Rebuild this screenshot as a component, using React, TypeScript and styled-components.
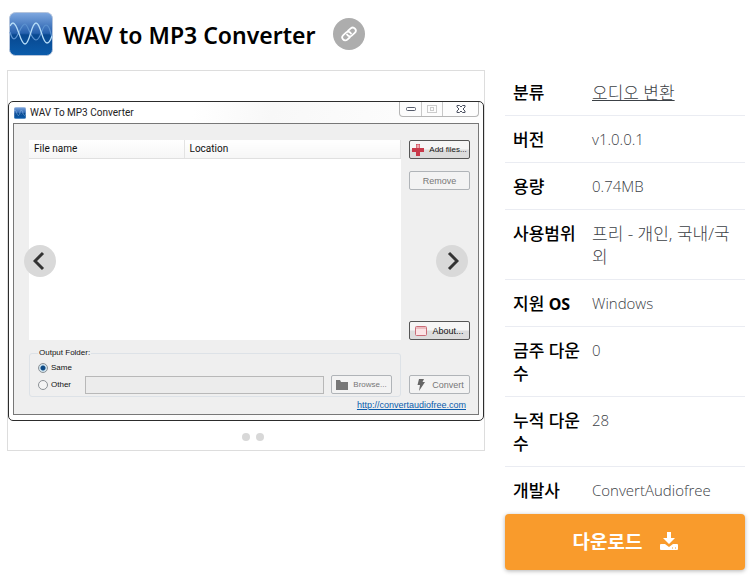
import React from "react";
import styled, { createGlobalStyle, css } from "styled-components";

const GlobalStyle = createGlobalStyle`
  *, *::before, *::after { box-sizing: border-box; }
  body {
    margin: 0;
    background: #fff;
    color: #000;
    font-family: "Open Sans", "Noto Sans CJK KR", sans-serif;
  }
  button, input { font: inherit; }
`;

const Page = styled.div`
  padding: 0 5px 8px 7px;
`;

const Header = styled.header`
  display: flex;
  align-items: center;
  padding: 12px 2px 13px;
`;

const AppIcon = styled.svg`
  flex: none;
  display: block;
  width: 44px;
  height: 44px;
`;

const Title = styled.h1`
  margin: 0 17px 0 10px;
  padding-top: 2px;
  font-family: "Noto Sans", "Noto Sans CJK KR", sans-serif;
  font-size: 23px;
  line-height: 32px;
  font-weight: 600;
`;

const CopyLink = styled.button`
  display: grid;
  place-items: center;
  width: 32px;
  height: 32px;
  padding: 0;
  border: 0;
  border-radius: 50%;
  background: #adadad;
  color: #fff;
`;

const Columns = styled.main`
  display: grid;
  grid-template-columns: minmax(0, 1fr) 240px;
  align-items: start;
  gap: 20px;
`;

const Carousel = styled.section`
  position: relative;
  margin-top: 1px;
  padding: 30px 0 9px;
  border: 1px solid #ddd;
`;

const Arrow = styled.button<{ $side: "left" | "right" }>`
  position: absolute;
  top: 174px;
  ${(p) => p.$side}: 16px;
  display: grid;
  place-items: center;
  width: 32px;
  height: 32px;
  padding: 0;
  border: 0;
  border-radius: 50%;
  background: #d9d9d9;
  color: #333;
`;

const Dots = styled.div`
  display: flex;
  justify-content: center;
  gap: 6px;
  padding-top: 12px;
  padding-left: 14px;
`;

const Dot = styled.button`
  width: 8px;
  height: 8px;
  padding: 0;
  border: 0;
  border-radius: 50%;
  background: #d8d8d8;
`;

const Window = styled.div`
  padding: 0 4px 5px;
  border: 1px solid #2c2c2c;
  border-radius: 5px;
  background: linear-gradient(100deg, #fff 35%, #f8f8f8 50%, #fdfdfd 80%);
  font-family: "Liberation Sans", sans-serif;
  font-size: 8px;
  line-height: 12px;
  color: #222;
`;

const TitleBar = styled.div`
  display: flex;
  align-items: flex-start;
  gap: 4px;
  height: 21px;
  padding-left: 1px;
`;

const MiniIcon = styled.svg`
  flex: none;
  width: 12px;
  height: 12px;
  margin-top: 5px;
`;

const WindowTitle = styled.span`
  flex: 1;
  margin-top: 5px;
  font-family: Roboto, sans-serif;
  font-size: 10px;
`;

const WindowControls = styled.div`
  display: flex;
  border: 1px solid #b5b5b5;
  border-top: 0;
  border-radius: 0 0 4px 4px;
`;

const ControlButton = styled.button<{ $wide?: boolean }>`
  display: grid;
  place-items: center;
  width: ${(p) => (p.$wide ? 36 : 21)}px;
  height: 14px;
  padding: 0;
  border: 0;
  background: transparent;
  & + & { border-left: 1px solid #c8c8c8; }
`;

const WindowBody = styled.div`
  display: grid;
  grid-template-columns: minmax(0, 1fr) 61px;
  column-gap: 8px;
  row-gap: 7px;
  padding: 16px 8px 2px 15px;
  border: 1px solid #777;
  background: #efefef;
`;

const FileTable = styled.table`
  width: 100%;
  height: 200px;
  border-collapse: collapse;
  table-layout: fixed;
  background: #fff;
  th {
    height: 18px;
    padding: 0 5px;
    border-bottom: 1px solid #e0e0e0;
    border-right: 1px solid #e3e3e3;
    background: linear-gradient(#fff, #f6f6f6);
    font-family: Roboto, sans-serif;
    font-size: 10px;
    font-weight: 400;
    text-align: left;
    color: #111;
  }
  th:first-child { width: 155px; }
  td { padding: 0; }
`;

const ButtonStack = styled.div<{ $inset?: boolean }>`
  display: flex;
  flex-direction: column;
  gap: 12px;
  padding-bottom: ${(p) => (p.$inset ? 3 : 0)}px;
`;

const WinButton = styled.button<{ $muted?: boolean; $bottom?: boolean }>`
  display: flex;
  align-items: center;
  justify-content: center;
  gap: 5px;
  width: 61px;
  height: 19px;
  padding: 0 2px;
  border: 1px solid #555;
  border-radius: 2px;
  background: linear-gradient(#f6f6f6 45%, #dcdcdc 55%);
  color: #111;
  white-space: nowrap;
  svg { flex: none; }
  ${(p) => p.$bottom && css`margin-top: auto;`}
  ${(p) =>
    p.$muted &&
    css`
      border-color: #b0b4b8;
      background: #f3f3f3;
      color: #777;
    `}
`;

const WideLabel = styled.span`
  font-size: 9px;
`;

const OutputFolder = styled.fieldset`
  min-width: 0;
  margin: 0;
  padding: 1px 8px 2px;
  border: 1px solid #dde2e7;
  border-radius: 3px;
  legend {
    padding: 0 1px;
    color: #111;
  }
`;

const OptionRow = styled.div`
  display: flex;
  align-items: center;
`;

const Radio = styled.label`
  display: flex;
  align-items: center;
  gap: 3px;
  width: 47px;
  height: 15px;
  color: #111;
  input {
    appearance: none;
    width: 10px;
    height: 10px;
    margin: 0;
    border: 1px solid #8c9196;
    border-radius: 50%;
    background: #f4f4f4;
  }
  input:checked {
    background: radial-gradient(circle, #0d4a86 2px, #cfe3ee 3px);
  }
`;

const PathInput = styled.input`
  flex: 1;
  min-width: 0;
  height: 18px;
  margin-right: 7px;
  padding: 0 4px;
  border: 1px solid #b8b8b8;
  background: #ececec;
`;

const SiteLink = styled.a`
  grid-column: 1 / -1;
  justify-self: end;
  margin-right: 4px;
  margin-top: -6px;
  color: #0a5cad;
  font-size: 9px;
  line-height: 14px;
`;

const Details = styled.table`
  width: 100%;
  border-collapse: separate;
  border-spacing: 0;
  table-layout: fixed;
  line-height: 23px;
  tr:not(:last-child) > * { border-bottom: 1px solid #eaecf2; }
`;

const Name = styled.th`
  width: 79px;
  padding: 12px 0 11px 8px;
  font-family: "Noto Sans", "Noto Sans CJK KR", sans-serif;
  font-size: 17px;
  font-weight: 500;
  text-align: left;
  vertical-align: top;
  word-break: break-all;
`;

const Value = styled.td<{ $korean?: boolean }>`
  padding: 12px 8px 11px;
  color: #3c4146;
  font-size: ${(p) => (p.$korean ? 17 : 15)}px;
  font-weight: 300;
  vertical-align: top;
  word-break: break-all;
  a { color: inherit; }
`;

const Latin = styled.b`
  font-size: 16px;
  line-height: 1;
  font-weight: 700;
`;

const Download = styled.button`
  display: flex;
  align-items: center;
  justify-content: center;
  gap: 17px;
  width: 100%;
  height: 56px;
  margin-top: 1px;
  padding: 0 4px 2px 6px;
  border: 0;
  border-radius: 4px;
  background: #f99b2c;
  box-shadow: 0 1px 4px rgba(0, 0, 0, 0.3);
  color: #fff;
  font-size: 19px;
  font-weight: 700;
`;

function WaveArt() {
  return (
    <>
      <defs>
        <linearGradient id="blue" x1="0" y1="0" x2="0" y2="1">
          <stop offset="0" stopColor="#7fa8e0" />
          <stop offset="0.48" stopColor="#2761ae" />
          <stop offset="0.52" stopColor="#084890" />
          <stop offset="1" stopColor="#0b5cab" />
        </linearGradient>
      </defs>
      <rect x="0.5" y="0.5" width="43" height="43" rx="6" fill="url(#blue)" stroke="#b4c4dc" />
      <path d="M1 20C3 27 5 29 8 24S13 12 16 12S22 28 27 28S33 13 37 13S41 20 43 25" fill="none" stroke="#5c93d0" strokeWidth="1.2" />
      <path d="M1 14C2 12 3 11 4 11C9 11 11 32 16 32S22 11 27 11S33 31 38 31C40 31 42 27 43 24" fill="none" stroke="#b5dcf8" strokeWidth="1.3" />
    </>
  );
}

const rows: { name: React.ReactNode; value: React.ReactNode; korean?: boolean }[] = [
  { name: "분류", value: <a href="#audio">오디오 변환</a>, korean: true },
  { name: "버전", value: "v1.0.0.1" },
  { name: "용량", value: "0.74MB" },
  { name: "사용범위", value: "프리 - 개인, 국내/국외", korean: true },
  { name: <>지원 <Latin>OS</Latin></>, value: "Windows" },
  { name: "금주 다운수", value: "0" },
  { name: "누적 다운수", value: "28" },
  { name: "개발사", value: "ConvertAudiofree" },
];

function ConverterWindow() {
  return (
    <Window>
      <TitleBar>
        <MiniIcon viewBox="0 0 44 44" aria-hidden="true"><WaveArt /></MiniIcon>
        <WindowTitle>WAV To MP3 Converter</WindowTitle>
        <WindowControls>
          <ControlButton aria-label="Minimize">
            <svg width="10" height="5"><rect x="0.5" y="0.5" width="9" height="3" rx="1" fill="#fff" stroke="#555b6b" /></svg>
          </ControlButton>
          <ControlButton aria-label="Maximize">
            <svg width="10" height="8"><rect x="0.5" y="0.5" width="9" height="7" fill="none" stroke="#ccc" /><rect x="3.5" y="2.5" width="3" height="3" fill="none" stroke="#ccc" /></svg>
          </ControlButton>
          <ControlButton $wide aria-label="Close">
            <svg width="10" height="8" viewBox="0 0 10 8"><path d="M1 .5h2.5L5 2 6.500 .5H9V2L7 4l2 2v1.500H6.500L5 6 3.500 7.500H1V6l2-2-2-2z" fill="#fff" stroke="#4b5060" /></svg>
          </ControlButton>
        </WindowControls>
      </TitleBar>
      <WindowBody>
        <FileTable>
          <thead><tr><th>File name</th><th>Location</th></tr></thead>
          <tbody><tr><td colSpan={2} /></tr></tbody>
        </FileTable>
        <ButtonStack>
          <WinButton>
            <svg width="12" height="12" viewBox="0 0 12 12"><path d="M4 0h4v4h4v4H8v4H4V8H0V4h4z" fill="#c8394a" /><path d="M4.500 .5h3V4h-3z" fill="#eda9ae" /></svg>
            Add files...
          </WinButton>
          <WinButton $muted><WideLabel>Remove</WideLabel></WinButton>
          <WinButton $bottom>
            <svg width="12" height="10"><rect x="0.5" y="0.5" width="11" height="9" rx="1" fill="#fbe3e5" stroke="#c96d78" /><path d="M1 2h10" stroke="#dc949c" /></svg>
            <WideLabel>About...</WideLabel>
          </WinButton>
        </ButtonStack>
        <OutputFolder>
          <legend>Output Folder:</legend>
          <Radio><input type="radio" name="output" defaultChecked />Same</Radio>
          <OptionRow>
            <Radio><input type="radio" name="output" />Other</Radio>
            <PathInput aria-label="Output path" />
            <WinButton $muted>
              <svg width="12" height="10"><path d="M0 0h4l1 2h7v8H0z" fill="#777" /></svg>
              Browse...
            </WinButton>
          </OptionRow>
        </OutputFolder>
        <ButtonStack $inset>
          <WinButton $muted $bottom>
            <svg width="12" height="12" viewBox="0 0 12 12"><path d="M4 0h5L7.500 3H10L4 12l1-6H2.500z" fill="#666" /></svg>
            <WideLabel>Convert</WideLabel>
          </WinButton>
        </ButtonStack>
        <SiteLink href="http://convertaudiofree.com">http://convertaudiofree.com</SiteLink>
      </WindowBody>
    </Window>
  );
}

export default function App() {
  return (
    <Page>
      <GlobalStyle />
      <Header>
        <AppIcon viewBox="0 0 44 44" aria-hidden="true"><WaveArt /></AppIcon>
        <Title>WAV to MP3 Converter</Title>
        <CopyLink aria-label="Copy link">
          <svg width="18" height="18" viewBox="0 0 18 18" fill="none" stroke="currentColor" strokeWidth="1.8" strokeLinecap="round">
            <g transform="rotate(-42 9 9)">
              <path d="M7.500 12H4A3 3 0 0 1 4 6H8A3 3 0 0 1 10.800 10" />
              <path d="M10.500 6H14A3 3 0 0 1 14 12H10A3 3 0 0 1 7.200 8" />
            </g>
          </svg>
        </CopyLink>
      </Header>
      <Columns>
        <Carousel aria-label="Screenshots">
          <ConverterWindow />
          <Dots>
            <Dot aria-label="Slide 1" />
            <Dot aria-label="Slide 2" />
          </Dots>
          <Arrow $side="left" aria-label="Previous">
            <svg width="14" height="20" viewBox="0 0 14 20"><path d="M10 2L2 10l8 8" fill="none" stroke="currentColor" strokeWidth="3" /></svg>
          </Arrow>
          <Arrow $side="right" aria-label="Next">
            <svg width="14" height="20" viewBox="0 0 14 20"><path d="M4 2l8 8-8 8" fill="none" stroke="currentColor" strokeWidth="3" /></svg>
          </Arrow>
        </Carousel>
        <aside>
          <Details>
            <tbody>
              {rows.map((r, i) => (
                <tr key={i}>
                  <Name scope="row">{r.name}</Name>
                  <Value $korean={r.korean}>{r.value}</Value>
                </tr>
              ))}
            </tbody>
          </Details>
          <Download>
            다운로드
            <svg width="20" height="20" viewBox="0 0 20 20" fill="currentColor" aria-hidden="true">
              <path d="M8 1h4v6h4l-6 6-6-6h4z" />
              <path fillRule="evenodd" d="M2 13h4l4 3 4-3h4q1 0 1 1v4q0 1-1 1H2q-1 0-1-1v-4q0-1 1-1zM13 16.500v1h1v-1zM16 16.500v1h1v-1z" />
            </svg>
          </Download>
        </aside>
      </Columns>
    </Page>
  );
}
